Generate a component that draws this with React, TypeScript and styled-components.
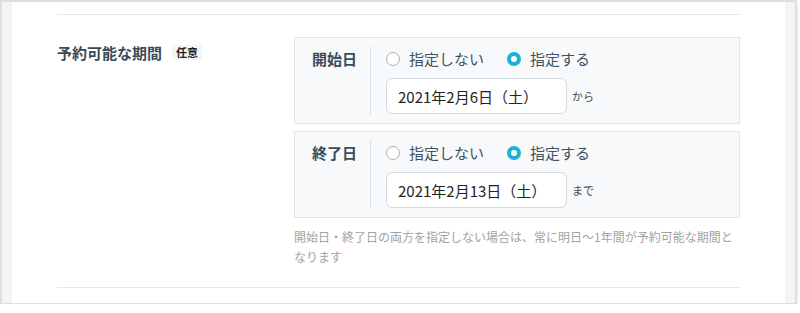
import React from 'react';
import styled, { createGlobalStyle } from 'styled-components';

const GlobalStyle = createGlobalStyle`
  html, body {
    margin: 0;
    padding: 0;
    background: #ffffff;
  }
  body {
    font-family: "Noto Sans CJK JP", "Noto Sans", sans-serif;
  }
`;

const Frame = styled.div`
  box-sizing: border-box;
  width: 797px;
  height: 304px;
  border: 2px solid #dedede;
  border-bottom-width: 1px;
  border-right-width: 2px;
  box-shadow: 0 3px 4px rgba(0, 0, 0, 0.12);
  display: flex;
  background: #ffffff;
`;

const Strip = styled.div`
  width: 10px;
  flex: none;
  background: #f4f4f4;
`;

const Content = styled.div`
  flex: 1;
  padding: 12px 45px 0;
`;

const Section = styled.div`
  border-top: 1px solid #e6e9ec;
  border-bottom: 1px solid #e6e9ec;
  display: grid;
  grid-template-columns: 237px 446px;
  padding: 22px 0 20px;
`;

const Heading = styled.div`
  display: flex;
  align-items: center;
  padding-top: 4px;
  height: 22px;
`;

const HeadingText = styled.span`
  font-size: 15px;
  font-weight: 700;
  color: #3a4c5a;
  margin-right: 10px;
`;

const Badge = styled.span`
  font-size: 11px;
  font-weight: 700;
  color: #1e1e1e;
  background: #f3f5f7;
  line-height: 15px;
  padding: 0 4px;
`;

const Fields = styled.div`
  display: flex;
  flex-direction: column;
  gap: 7px;
`;

const Box = styled.div`
  box-sizing: border-box;
  display: flex;
  background: #f7f9fa;
  border: 1px solid #e2e6e9;
  padding: 8px 0 8px 17px;
`;

const BoxLabel = styled.div`
  width: 45px;
  padding: 2px 13px 0 0;
  line-height: 22px;
  font-size: 15px;
  font-weight: 700;
  color: #3a4c5a;
`;

const BoxBody = styled.div`
  border-left: 1px solid #dde2e6;
  padding: 2px 0 1px 15px;
  display: flex;
  flex-direction: column;
  gap: 8px;
`;

const RadioRow = styled.div`
  display: flex;
  align-items: center;
  height: 22px;
  gap: 23px;
`;

const RadioItem = styled.label`
  display: flex;
  align-items: center;
  gap: 9px;
  font-size: 15px;
  color: #3f5260;
  line-height: 22px;
`;

const RadioDot = styled.span<{ checked?: boolean }>`
  box-sizing: border-box;
  width: 14px;
  height: 14px;
  border-radius: 50%;
  background: #ffffff;
  border: ${p => (p.checked ? '4.5px solid #1bb3d1' : '1px solid #a9b3bb')};
`;

const InputRow = styled.div`
  display: flex;
  align-items: center;
`;

const DateInput = styled.div`
  box-sizing: border-box;
  width: 181px;
  height: 36px;
  background: #ffffff;
  border: 1px solid #d3d9de;
  border-radius: 6px;
  padding-left: 11px;
  display: flex;
  align-items: center;
  font-size: 15px;
  color: #222222;
`;

const Suffix = styled.span`
  margin-left: 5px;
  font-size: 11px;
  color: #4a4a4a;
`;

const Help = styled.p`
  margin: 9px 0 0;
  font-size: 12px;
  line-height: 20px;
  color: #a2a2a2;
`;

interface PeriodFieldProps {
  label: string;
  date: string;
  suffix: string;
}

const PeriodField: React.FC<PeriodFieldProps> = ({ label, date, suffix }) => (
  <Box>
    <BoxLabel>{label}</BoxLabel>
    <BoxBody>
      <RadioRow>
        <RadioItem>
          <RadioDot />
          指定しない
        </RadioItem>
        <RadioItem>
          <RadioDot checked />
          指定する
        </RadioItem>
      </RadioRow>
      <InputRow>
        <DateInput>{date}</DateInput>
        <Suffix>{suffix}</Suffix>
      </InputRow>
    </BoxBody>
  </Box>
);

const App: React.FC = () => (
  <>
    <GlobalStyle />
    <Frame>
      <Strip />
      <Content>
        <Section>
          <Heading>
            <HeadingText>予約可能な期間</HeadingText>
            <Badge>任意</Badge>
          </Heading>
          <div>
            <Fields>
              <PeriodField label="開始日" date="2021年2月6日（土）" suffix="から" />
              <PeriodField label="終了日" date="2021年2月13日（土）" suffix="まで" />
            </Fields>
            <Help>
              開始日・終了日の両方を指定しない場合は、常に明日〜1年間が予約可能な期間となります
            </Help>
          </div>
        </Section>
      </Content>
      <Strip />
    </Frame>
  </>
);

export default App;
